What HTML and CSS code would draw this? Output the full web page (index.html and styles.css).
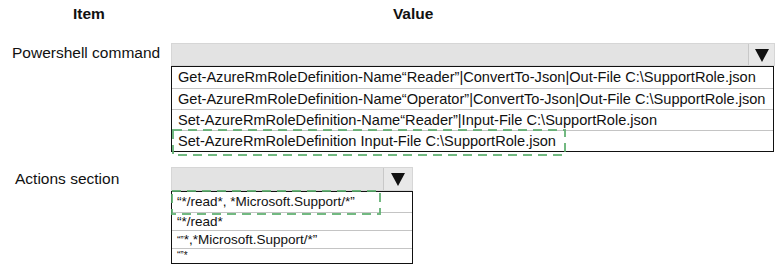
FILE: index.html
```html
<!DOCTYPE html>
<html lang="en">
<head>
  <meta charset="UTF-8">
  <meta name="viewport" content="width=device-width, initial-scale=1.0">
  <title>Answer Area</title>
  <link rel="stylesheet" href="styles.css">
</head>
<body>
  <div class="sheet">
    <div class="head">
      <div class="head-item">Item</div>
      <div class="head-value">Value</div>
    </div>

    <!-- PowerShell command choice -->
    <div class="field field-cmd">
      <div class="label">Powershell command</div>
      <div class="combo combo-wide">
        <div class="combo-bar"><div class="combo-btn"><span class="arrow"></span></div></div>
        <ul class="options">
          <li>Get-AzureRmRoleDefinition-Name“Reader”|ConvertTo-Json|Out-File C:\SupportRole.json</li>
          <li>Get-AzureRmRoleDefinition-Name“Operator”|ConvertTo-Json|Out-File C:\SupportRole.json</li>
          <li>Set-AzureRmRoleDefinition-Name“Reader”|Input-File C:\SupportRole.json</li>
          <li>Set-AzureRmRoleDefinition Input-File C:\SupportRole.json</li>
          <svg class="pick pick-cmd" width="394" height="27"><rect x="1" y="1" width="392" height="25"/></svg>
        </ul>
      </div>
    </div>

    <!-- Actions section choice -->
    <div class="field field-act">
      <div class="label">Actions section</div>
      <div class="combo combo-narrow">
        <div class="combo-bar"><div class="combo-btn"><span class="arrow"></span></div></div>
        <ul class="options">
          <li class="row-a">“*/read*, *Microsoft.Support/*”</li>
          <li class="row-b">“*/read*</li>
          <li class="row-b"><span class="q">“”</span>*,*Microsoft.Support/*”</li>
          <li class="row-c">“”*</li>
          <svg class="pick pick-act" width="210" height="25"><rect x="1" y="1" width="208" height="23"/></svg>
        </ul>
      </div>
    </div>
  </div>
</body>
</html>
```

FILE: styles.css
```css
body {
  margin: 0;
  padding: 0;
  background-color: white;
  font-family: "Liberation Sans", Arial, sans-serif;
  color: #111;
}

.sheet {
  width: 778px;
  height: 268px;
}

.head {
  display: flex;
  height: 43px;
  font-weight: bold;
  font-size: 15.5px;
  line-height: 28px;
}

.head-item {
  margin-left: 73px;
}

.head-value {
  margin-left: 288px;
}

.field {
  display: flex;
}

.field-act {
  margin-top: 15px;
}

.label {
  width: 171px;
  font-size: 15.5px;
  line-height: 20px;
  box-sizing: border-box;
}

.field-cmd .label {
  padding-left: 12px;
}

.field-act .label {
  padding-left: 15px;
  padding-top: 2px;
}

.combo-bar {
  display: flex;
  justify-content: flex-end;
  background-color: #e3e3e3;
  border: 1px solid #d6d6d6;
  box-sizing: border-box;
}

.combo-wide .combo-bar {
  width: 604px;
  height: 23px;
}

.combo-narrow .combo-bar {
  width: 242px;
  height: 24px;
}

.combo-btn {
  display: flex;
  align-items: center;
  justify-content: center;
  border-left: 1px solid #c8c8c8;
  background-color: #e8e8e8;
}

.combo-wide .combo-btn {
  width: 25px;
}

.combo-narrow .combo-btn {
  width: 28px;
}

.arrow {
  width: 0;
  height: 0;
  border-left: 7px solid transparent;
  border-right: 7px solid transparent;
  border-top: 13px solid #111;
  margin-top: 1px;
}

.options {
  position: relative;
  list-style: none;
  margin: 0;
  padding: 0;
  border: 1px solid #111;
  background-color: white;
}

.combo-wide .options {
  width: 601px;
}

.combo-narrow .options {
  width: 240px;
}

.options li {
  padding-left: 6px;
  border-top: 1px solid #c4c4c4;
  white-space: nowrap;
}

.options li:first-child {
  border-top: none;
}

.combo-wide .options li {
  font-size: 14.6px;
  height: 20px;
  line-height: 21px;
}

.combo-wide .options li:first-child {
  height: 21px;
}

.combo-narrow .options li {
  padding-left: 5px;
}

.row-a {
  font-size: 13.5px;
  height: 20px;
  line-height: 20px;
}

.row-b {
  font-size: 13.5px;
  height: 17px;
  line-height: 17px;
}

.row-c {
  font-size: 10px;
  height: 14px;
  line-height: 14px;
}

.q {
  font-size: 10px;
}

/* dashed marker round the chosen option */
.pick {
  position: absolute;
  fill: none;
  stroke: #5aad6c;
  stroke-width: 2;
  stroke-dasharray: 9 6;
  opacity: 0.85;
}

.pick-cmd {
  left: 0;
  top: 62px;
}

.pick-act {
  left: -1px;
  top: -2px;
}
```
